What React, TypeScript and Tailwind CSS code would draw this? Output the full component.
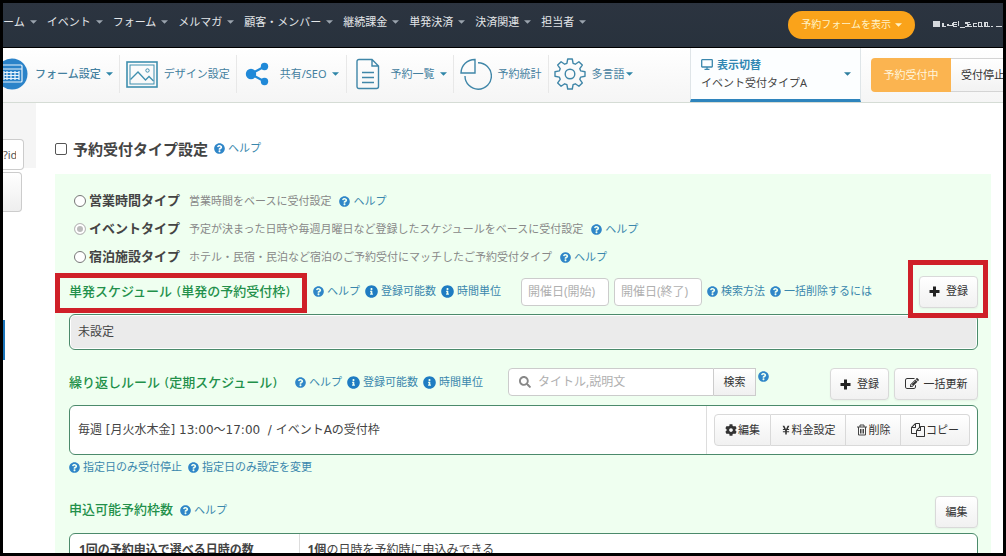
import React from "react";
import type { ReactNode } from "react";
import { FaCog, FaInfoCircle, FaQuestionCircle, FaSearch, FaYenSign } from "react-icons/fa";

const Caret = ({ className = "" }: { className?: string }) => (
  <svg viewBox="0 0 8 4" className={"h-1 w-[7px] shrink-0 " + className} fill="currentColor" aria-hidden="true">
    <path d="M0 0h8L4 4z" />
  </svg>
);

const Help = ({ label, info = false }: { label: string; info?: boolean }) => (
  <a href="#help" className="flex items-center gap-[3px] text-[11px] whitespace-nowrap text-[#3a87ad]">
    {info ? (
      <FaInfoCircle className="size-[13px] shrink-0 text-[#1f7cc2]" />
    ) : (
      <FaQuestionCircle className="size-[11px] shrink-0 text-[#2f86c8]" />
    )}
    {label}
  </a>
);

const btn =
  "flex h-8 shrink-0 items-center justify-center whitespace-nowrap bg-linear-to-b from-white to-[#f1f1f1] text-[11px] text-[#333] border-[#d9d9d9]";

const Btn = ({ children, className }: { children: ReactNode; className: string }) => (
  <button type="button" className={btn + " rounded border shadow-xs " + className}>
    {children}
  </button>
);

const Tool = ({ icon, label, caret, className = "" }: { icon: ReactNode; label: string; caret?: boolean; className?: string }) => (
  <a href="#tool" className={"flex h-[38px] shrink-0 items-center text-[11px] whitespace-nowrap text-[#44809f] " + className}>
    {icon}
    <span>{label}</span>
    {caret && <Caret className="ml-[5px] text-[#2f86a8]" />}
  </a>
);

const CalendarIcon = () => (
  <svg viewBox="0 0 32 32" className="size-8 shrink-0" aria-hidden="true">
    <circle cx="16" cy="16" r="15.5" fill="#2b83c9" />
    <g fill="none" stroke="#e8f4fc" strokeWidth="1.2">
      <rect x="5" y="7" width="21" height="17" rx="1" />
      <path d="M5 11h21M8 14.500h15M8 17.500h15M8 20.500h15M11 13v9M15 13v9M19 13v9M23 13v9M8 13v9" />
    </g>
  </svg>
);

const PictureIcon = () => (
  <svg viewBox="0 0 32 27" className="h-[27px] w-8 shrink-0" fill="none" stroke="#3f8fae" aria-hidden="true">
    <rect x="1" y="1" width="30" height="25" strokeWidth="1.600" />
    <rect x="4" y="4" width="24" height="19" />
    <path d="M4.500 18.500 12 11l7.500 8 3.500-3.500 4.500 4.500" strokeWidth="1.300" />
    <circle cx="21.500" cy="9.500" r="1.700" />
  </svg>
);

const ShareIcon = () => (
  <svg viewBox="0 0 24 24" className="size-6 shrink-0" fill="#2089d8" aria-hidden="true">
    <path d="M19.500 4.500 6 12l13.500 7.500" fill="none" stroke="#2089d8" strokeWidth="2.200" />
    <circle cx="6" cy="12" r="5.200" />
    <circle cx="19.500" cy="4.500" r="3.700" />
    <circle cx="19.500" cy="19.500" r="3.700" />
  </svg>
);

const DocIcon = () => (
  <svg viewBox="0 0 24 32" className="h-8 w-6 shrink-0" fill="none" stroke="#3f86a8" strokeWidth="1.400" aria-hidden="true">
    <path d="M3 1.500h13l6.500 6.500v20.500a2 2 0 0 1-2 2H3a2 2 0 0 1-2-2v-25a2 2 0 0 1 2-2zM16 1.500V8h6.500" />
    <path d="M6 14.500h12M6 19.500h12M6 24.500h12" />
  </svg>
);

const PieIcon = () => (
  <svg viewBox="0 0 32 32" className="size-8 shrink-0" fill="none" stroke="#3f86a8" strokeWidth="1.400" aria-hidden="true">
    <path d="M15 1.500V15H1A13.800 13.800 0 0 1 15 1.500z" />
    <path d="M18 4.800A13.200 13.200 0 1 1 5 18" />
  </svg>
);

const GearIcon = () => (
  <svg viewBox="0 0 32 32" className="size-8 shrink-0" fill="none" stroke="#3f86a8" strokeWidth="1.400" strokeLinejoin="round" aria-hidden="true">
    <path d="M13.700 1h4.600l.8 4.300 2.200.9 3.600-2.500 3.400 3.400-2.500 3.600.9 2.200 4.300.8v4.600l-4.300.8-.9 2.200 2.500 3.600-3.400 3.400-3.600-2.500-2.200.9-.8 4.300h-4.600l-.8-4.300-2.200-.9-3.600 2.500-3.400-3.400 2.500-3.600-.9-2.200-4.300-.8v-4.600l4.300-.8.900-2.200-2.500-3.600 3.400-3.400 3.600 2.500 2.200-.9z" />
    <circle cx="16" cy="16" r="4.800" />
  </svg>
);

const PlusIcon = () => (
  <svg viewBox="0 0 11 11" className="size-[11px]" fill="#222" aria-hidden="true">
    <path d="M4 .500h3V4h3.500v3H7v3.500H4V7H.500V4H4z" />
  </svg>
);

const EditIcon = () => (
  <svg viewBox="0 0 1792 1792" className="size-[14px]" fill="#333" aria-hidden="true">
    <path d="M888 1184l116-116-152-152-116 116v56h96v96h56zm440-720q-16-16-33 1l-350 350q-17 17-1 33t33-1l350-350q17-17 1-33zm80 594v190q0 119-84.500 203.500t-203.500 84.500h-832q-119 0-203.500-84.500t-84.500-203.500v-832q0-119 84.500-203.500t203.500-84.500h832q63 0 117 25 15 7 18 23 3 17-9 29l-49 49q-14 14-32 8-23-6-45-6h-832q-66 0-113 47t-47 113v832q0 66 47 113t113 47h832q66 0 113-47t47-113v-126q0-13 9-22l64-64q15-15 35-7t20 29zm-96-738l288 288-672 672h-288v-288zm444 132l-92 92-288-288 92-92q28-28 68-28t68 28l152 152q28 28 28 68t-28 68z" />
  </svg>
);

const FilesIcon = () => (
  <svg viewBox="0 0 1792 1792" className="size-[14px]" fill="#333" aria-hidden="true">
    <path d="M1696 384q40 0 68 28t28 68v1216q0 40-28 68t-68 28h-960q-40 0-68-28t-28-68v-288h-544q-40 0-68-28t-28-68v-672q0-40 20-88t48-76l408-408q28-28 76-48t88-20h416q40 0 68 28t28 68v328q68-40 128-40h416zm-544 213l-299 299h299v-299zm-640-384l-299 299h299v-299zm196 647l316-316v-416h-384v416q0 40-28 68t-68 28h-416v640h512v-256q0-40 20-88t48-76zm956 804v-1152h-384v416q0 40-28 68t-68 28h-416v640h896z" />
  </svg>
);

const TrashIcon = () => (
  <svg viewBox="0 0 12 12" className="size-3" fill="none" stroke="#444" aria-hidden="true">
    <path d="M1 3h10M4 3V1h4v2M2.500 3v8h7V3M4.500 5v4.500M6 5v4.500M7.500 5v4.500" />
  </svg>
);

const MonitorIcon = () => (
  <svg viewBox="0 0 12 11" className="h-[11px] w-3" fill="none" stroke="#3a87ad" strokeWidth="1.300" aria-hidden="true">
    <rect x=".700" y=".700" width="10.600" height="7.300" rx=".500" />
    <path d="M3.500 10.300h5M6 8v2" />
  </svg>
);

const NAV = ["ホーム", "イベント", "フォーム", "メルマガ", "顧客・メンバー", "継続課金", "単発決済", "決済関連", "担当者"];

const TYPES = [
  { name: "営業時間タイプ", note: "営業時間をベースに受付設定" },
  { name: "イベントタイプ", note: "予定が決まった日時や毎週月曜日など登録したスケジュールをベースに受付設定" },
  { name: "宿泊施設タイプ", note: "ホテル・民宿・民泊など宿泊のご予約受付にマッチしたご予約受付タイプ" },
];

const Heading = ({ children }: { children: ReactNode }) => (
  <h2 className="font-['DejaVu_Sans','Noto_Sans_CJK_JP',sans-serif] text-[13px] font-medium whitespace-nowrap text-[#22904a]">{children}</h2>
);

export default function App() {
  return (
    <div className="flex h-screen flex-col overflow-hidden border-[3px] border-black bg-white font-['Noto_Sans','Noto_Sans_CJK_JP',sans-serif] text-xs text-[#444]">
      <header className="flex h-[45px] shrink-0 items-center justify-between overflow-hidden border-b border-black bg-linear-to-b from-[#2c3440] to-[#28323d]">
        <nav className="-ml-[11px] flex h-full items-center gap-[10px] pb-[6px]">
          {NAV.map((n) => (
            <a key={n} href="#nav" className="flex shrink-0 items-center gap-[5px] text-[11px] whitespace-nowrap text-[#e3e6e9]">
              {n}
              <Caret className="text-[#9aa3ad]" />
            </a>
          ))}
        </nav>
        <div className="flex shrink-0 items-center gap-[18px]">
          <button type="button" className="flex h-7 items-center gap-1 rounded-full bg-[#faa31a] px-[13px] text-[10px] whitespace-nowrap text-[#fff3c8]">
            予約フォームを表示
            <Caret />
          </button>
          <svg viewBox="0 0 70 8" className="h-2 w-[70px]" fill="#d5d9dd" aria-hidden="true">
            <path d="M0 0h7v6H0zM9 2h2v3h2v1H9zM14 3h2v1h3V2h1v3h-6zM20 1h4v1h-3v1h3v1h-3v1h3v1h-4zM25 0h1v5h-1zM27 6h5v1h-5zM32 1h5v1h-2v1h3v1h-2v1h3v1h-7V5h2V3h-2zM40 2h4v1h-3v2h3v1h-4zM45 1h4v4h-1V2h-2v3h4v1h-5zM51 1h4v4h-1V2h-1v3h4v1h-6zM58 5h2v1h-2zM63 5h6v1h-6z" />
          </svg>
        </div>
      </header>

      <div className="flex h-[55px] shrink-0 items-start overflow-hidden border-b border-[#d5dcd5] bg-linear-to-b from-white to-[#f5f5f5]">
        <div className="-ml-[7px] flex shrink-0 divide-x divide-[#e8e8e8] pt-[7px]">
          <Tool icon={<CalendarIcon />} label="フォーム設定" caret className="pr-[6px] font-medium [&>span]:ml-[7px]" />
          <Tool icon={<PictureIcon />} label="デザイン設定" className="px-[6px] [&>span]:ml-[6px]" />
          <Tool icon={<ShareIcon />} label="共有/SEO" caret className="pr-[7px] pl-2 [&>span]:ml-[11px]" />
          <Tool icon={<DocIcon />} label="予約一覧" caret className="pr-[6px] pl-[9px] [&>span]:ml-[11px]" />
          <Tool icon={<PieIcon />} label="予約統計" className="px-[6px] [&>span]:ml-[6px]" />
          <Tool icon={<GearIcon />} label="多言語" caret className="px-[5px] [&>span]:ml-[6px] [&>svg:last-child]:ml-px" />
        </div>
        <button type="button" className="ml-auto flex h-full w-[171px] shrink-0 items-center justify-between border-x border-b-[3px] border-x-[#dfe5e8] border-b-[#2e84bd] bg-[#fcfeff] pr-[9px] pl-[10px] text-left">
          <span className="flex flex-col text-[11px] leading-[18px] whitespace-nowrap text-[#444]">
            <span className="flex items-center gap-1 font-bold text-[#3186b2]">
              <MonitorIcon />
              表示切替
            </span>
            イベント受付タイプA
          </span>
          <Caret className="text-[#2f7f9f]" />
        </button>
        <div className="ml-[10px] flex h-[34px] w-[132px] shrink-0 self-center overflow-hidden text-[11px] whitespace-nowrap">
          <button type="button" className="w-20 shrink-0 rounded-l bg-[#fbb450] text-[#fff6dc]">予約受付中</button>
          <button type="button" className="w-16 shrink-0 border-y border-[#d4d4d4] bg-linear-to-b from-white to-[#f2f2f2] text-[#333]">受付停止</button>
        </div>
      </div>

      <div className="flex min-h-0 flex-1">
        <aside className="w-[33px] shrink-0 overflow-hidden">
          <div className="h-[65px] bg-[#f5f5f5] pt-9">
            <input aria-label="URL" defaultValue="?id=" className="h-[31px] w-[21px] rounded-r border border-l-0 border-[#ccc] bg-white pr-[7px] text-[11px] text-[#555]" />
          </div>
          <button type="button" aria-label="コピー" className="mt-[4px] block h-10 w-[19px] rounded-r border border-l-0 border-[#ccc] bg-linear-to-b from-white to-[#eee]" />
          <div className="mt-[108px] h-10 w-[2px] bg-[#1b75bb]" />
        </aside>

        <main className="min-w-0 flex-1 pr-3 pl-[19px]">
          <div className="flex h-[71px] items-center gap-[6px] pt-[20px]">
            <input id="type" type="checkbox" className="size-3 shrink-0 appearance-none rounded-[2px] border border-[#555] bg-white" />
            <label htmlFor="type" className="text-[15px] font-bold whitespace-nowrap text-[#444]">予約受付タイプ設定</label>
            <Help label="ヘルプ" />
          </div>

          <section className="h-[600px] bg-[#effff0] pt-[13px] pr-[13px] pl-[14px]">
            <div className="pl-[5px]">
              {TYPES.map((t, i) => (
                <div key={t.name} className="flex h-7 items-center">
                  <input
                    id={"t" + i}
                    name="kind"
                    type="radio"
                    defaultChecked={i === 1}
                    className="mr-[3px] size-3 shrink-0 appearance-none rounded-full border border-[#777] bg-white checked:border-[#bbb] checked:bg-[#bbb] checked:shadow-[inset_0_0_0_2px_#fff]"
                  />
                  <label htmlFor={"t" + i} className="text-[13px] font-bold whitespace-nowrap text-[#444]">{t.name}</label>
                  <span className="mr-2 ml-[9px] text-[11px] whitespace-nowrap text-[#888]">{t.note}</span>
                  <Help label="ヘルプ" />
                </div>
              ))}
            </div>

            <div className="flex h-[43px] items-center gap-[5px] pb-[2px]">
              <div className="relative mr-[3px] w-[236px] shrink-0">
                <Heading>単発スケジュール (単発の予約受付枠)</Heading>
                <span className="pointer-events-none absolute -top-2.5 -left-[14px] h-10 w-[252px] border-[5px] border-[#cf2028]" />
              </div>
              <Help label="ヘルプ" />
              <Help label="登録可能数" info />
              <Help label="時間単位" info />
              <input aria-label="開始" placeholder="開催日(開始)" className="ml-[15px] h-7 w-[88px] shrink-0 rounded border border-[#ccc] bg-white px-[6px] text-xs placeholder:text-[#b0b0b0]" />
              <input aria-label="終了" placeholder="開催日(終了)" className="h-7 w-[88px] shrink-0 rounded border border-[#ccc] bg-white px-[6px] text-xs placeholder:text-[#b0b0b0]" />
              <Help label="検索方法" />
              <Help label="一括削除するには" />
              <div className="relative ml-auto shrink-0">
                <Btn className="w-[59px] gap-[6px]">
                  <PlusIcon />
                  登録
                </Btn>
                <span className="pointer-events-none absolute -top-4 -left-[11px] h-[58px] w-20 border-[5px] border-[#cf2028]" />
              </div>
            </div>

            <div className="rounded-md border border-[#4b8a6b] bg-white p-px">
              <div className="flex h-8 items-center rounded bg-[#ebebeb] px-[7px] text-xs">未設定</div>
            </div>

            <div className="flex h-[55px] items-end gap-[5px] pb-[5px]">
              <div className="flex h-8 w-[221px] shrink-0 items-center pb-[2px]">
                <Heading>繰り返しルール (定期スケジュール)</Heading>
              </div>
              <div className="flex h-8 items-center gap-[5px] pb-1">
                <Help label="ヘルプ" />
                <Help label="登録可能数" info />
                <Help label="時間単位" info />
              </div>
              <div className="mb-1 ml-5 flex h-7 shrink-0">
                <label className="flex w-[206px] items-center gap-[7px] rounded-l border border-[#ccc] bg-white pl-[10px]">
                  <FaSearch className="size-3 shrink-0 text-[#888]" />
                  <input aria-label="検索" placeholder="タイトル,説明文" className="w-full min-w-0 bg-transparent text-xs placeholder:text-[#b0b0b0]" />
                </label>
                <button type="button" className="w-[42px] border border-l-0 border-[#ccc] bg-linear-to-b from-white to-[#f0f0f0] text-[11px] text-[#333]">検索</button>
              </div>
              <a href="#help" aria-label="ヘルプ" className="-ml-[3px] mb-[18px]">
                <FaQuestionCircle className="size-[11px] text-[#2f86c8]" />
              </a>
              <Btn className="ml-auto w-[59px] gap-[6px]">
                <PlusIcon />
                登録
              </Btn>
              <Btn className="w-[84px] gap-[5px]">
                <EditIcon />
                一括更新
              </Btn>
            </div>

            <div className="flex h-[50px] items-center rounded-md border border-[#4b8a6b] bg-white pr-[7px] pl-2">
              <p className="flex-1 font-['DejaVu_Sans','Noto_Sans_CJK_JP',sans-serif] text-xs whitespace-pre">{"毎週 [月火水木金] 13:00～17:00  / イベントAの受付枠"}</p>
              <div className="flex h-full items-center border-l border-[#ddd] pl-[7px]">
                <button type="button" className={btn + " w-[57px] gap-px rounded-l border"}><FaCog className="size-3" />編集</button>
                <button type="button" className={btn + " w-[75px] gap-px border-y border-r"}><FaYenSign className="size-[10px]" />料金設定</button>
                <button type="button" className={btn + " w-[55px] gap-px border-y border-r"}><TrashIcon />削除</button>
                <button type="button" className={btn + " w-[69px] gap-px rounded-r border-y border-r"}><FilesIcon />コピー</button>
              </div>
            </div>

            <div className="flex h-6 items-center gap-[6px]">
              <Help label="指定日のみ受付停止" />
              <Help label="指定日のみ設定を変更" />
            </div>

            <div className="flex h-[54px] items-end justify-between pb-[5px]">
              <div className="flex h-9 items-center gap-[7px]">
                <Heading>申込可能予約枠数</Heading>
                <Help label="ヘルプ" />
              </div>
              <Btn className="w-[43px]">編集</Btn>
            </div>

            <div className="rounded-md border border-[#4b8a6b] bg-white">
              <table className="w-full">
                <tbody>
                  <tr>
                    <th className="w-[229px] border-r border-[#ddd] pt-2 pl-[9px] text-left text-xs font-bold">1回の予約申込で選べる日時の数</th>
                    <td className="pt-2 pl-2 text-xs"><b>1個</b>の日時を予約時に申込みできる</td>
                  </tr>
                </tbody>
              </table>
            </div>
          </section>
        </main>
      </div>
    </div>
  );
}
